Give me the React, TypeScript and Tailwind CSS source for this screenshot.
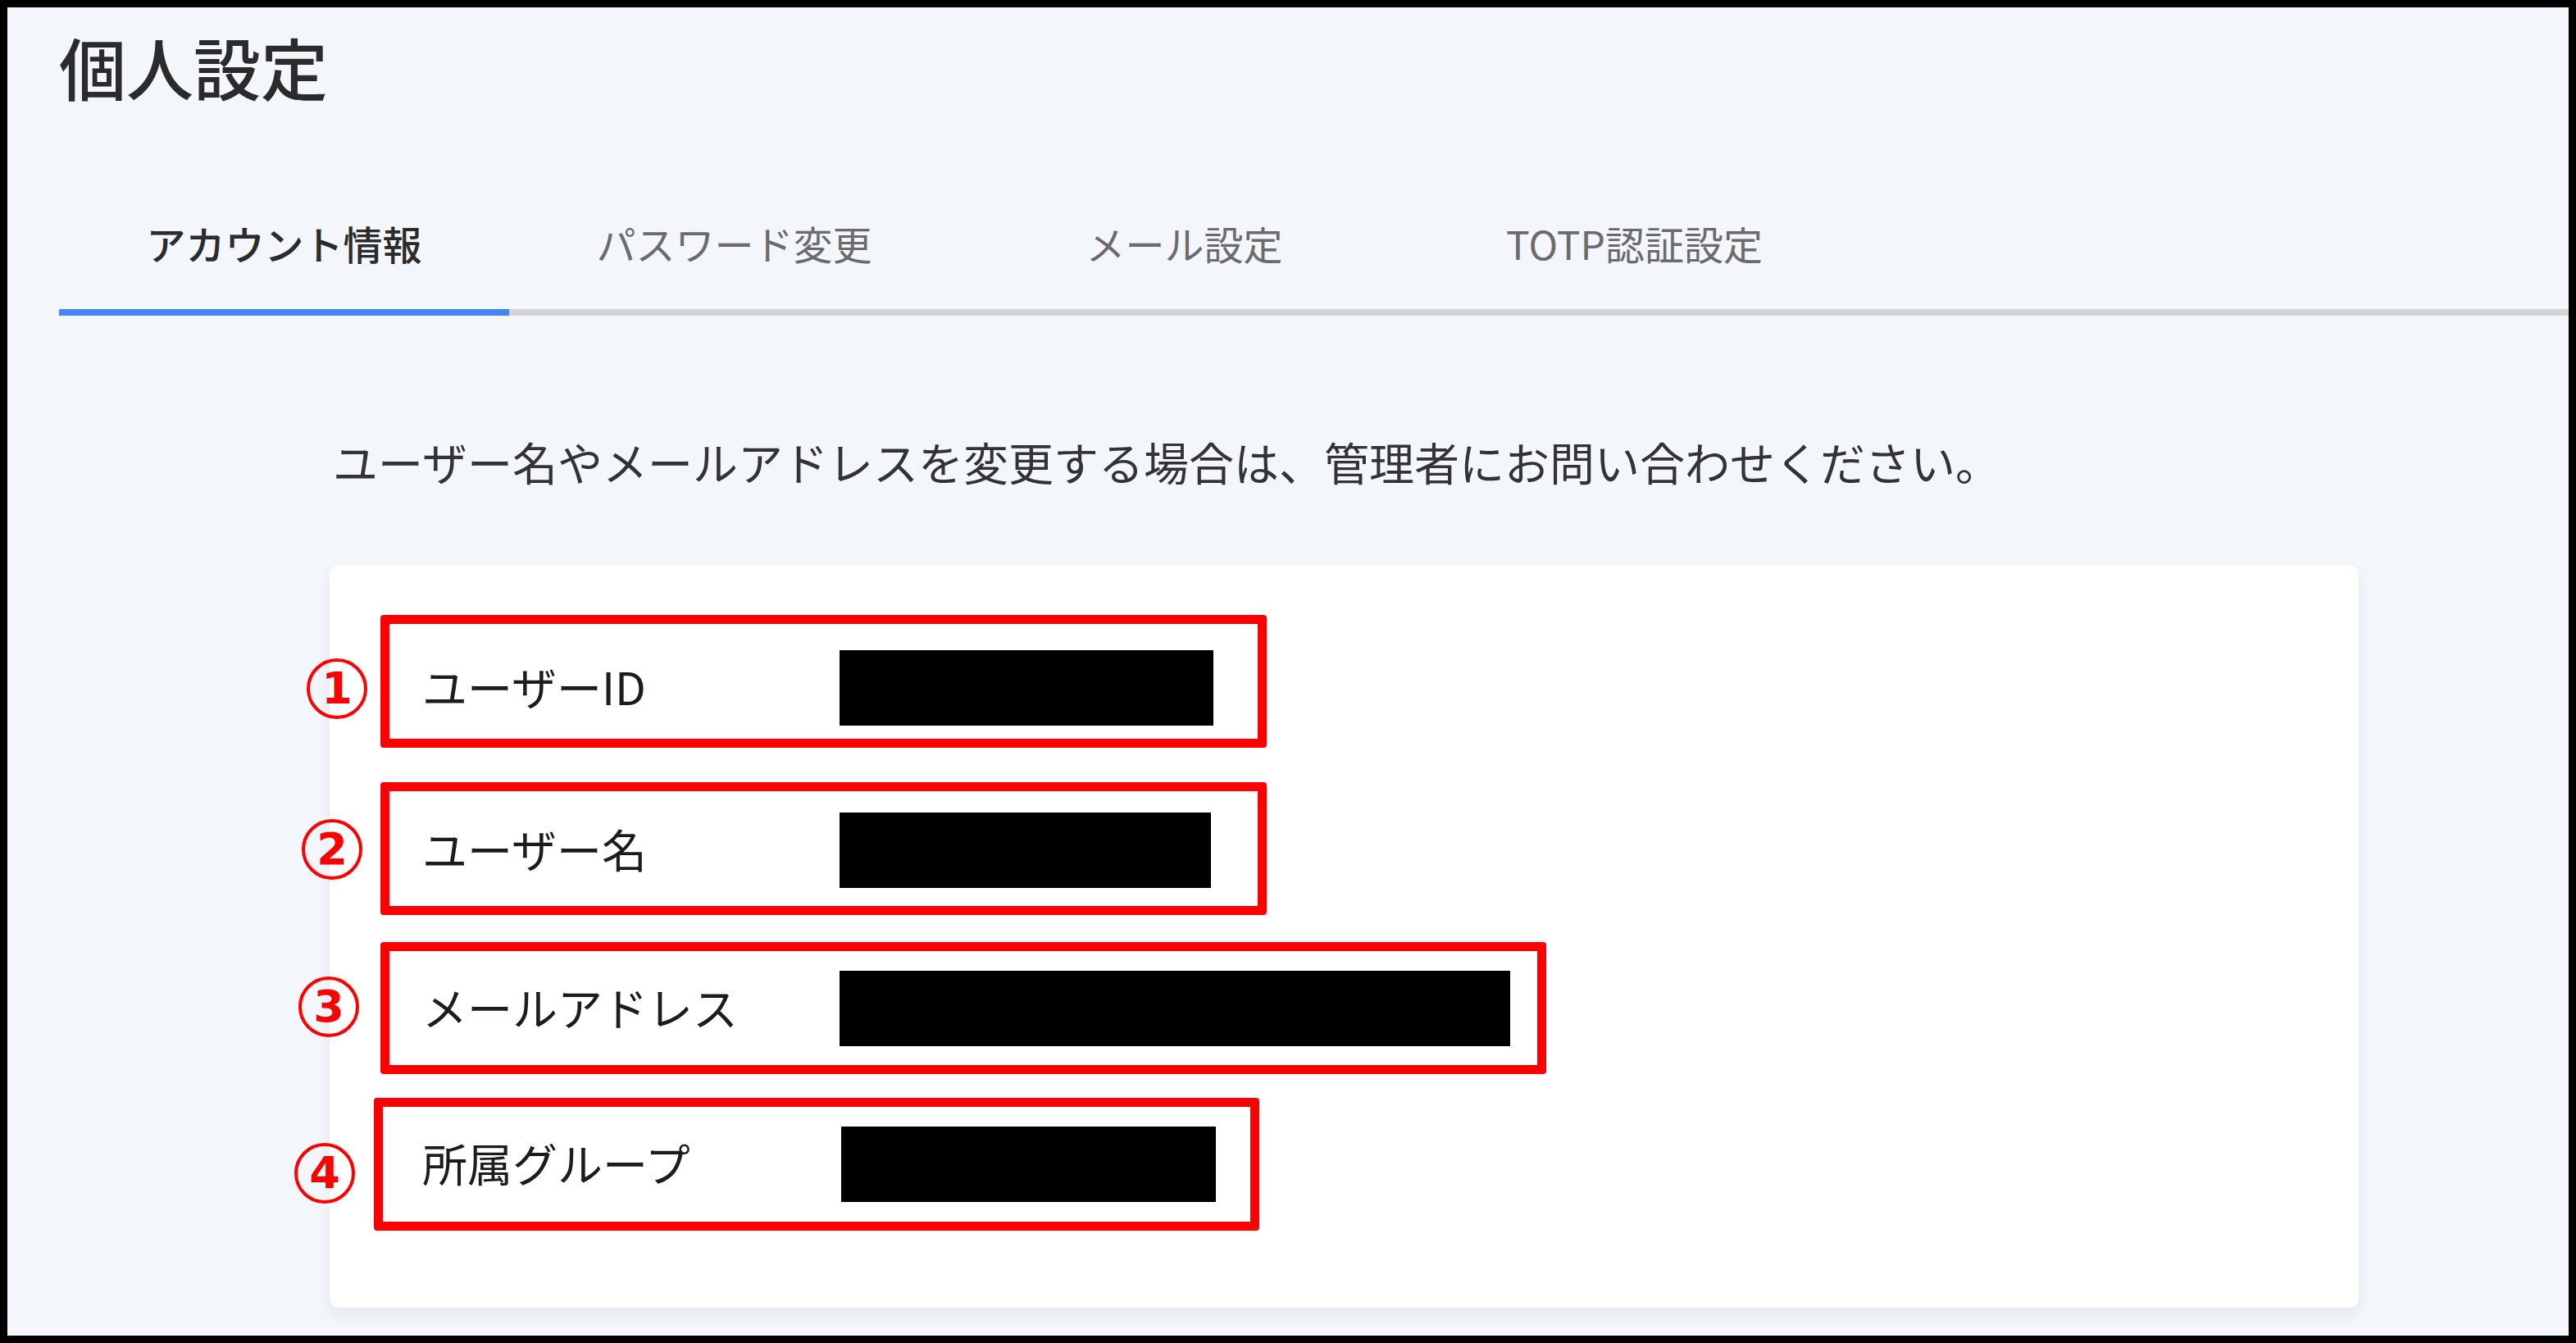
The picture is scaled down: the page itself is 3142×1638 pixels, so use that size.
import React from 'react';

type Row = {
  label: string;
  rowClass: string;
  valueClass: string;
  frameClass: string;
  badgeClass: string;
  num: string;
};

const rows: Row[] = [
  {
    label: 'ユーザーID',
    rowClass: 'mt-0',
    valueClass: 'w-[456px]',
    frameClass: '-left-[51px] -top-[43px] w-[1081px] h-[162px]',
    badgeClass: '-left-[141px] top-[10px]',
    num: '1',
  },
  {
    label: 'ユーザー名',
    rowClass: 'mt-[106px]',
    valueClass: 'w-[453px]',
    frameClass: '-left-[51px] -top-[37px] w-[1081px] h-[162px]',
    badgeClass: '-left-[147px] top-[8px]',
    num: '2',
  },
  {
    label: 'メールアドレス',
    rowClass: 'mt-[101px]',
    valueClass: 'w-[818px]',
    frameClass: '-left-[51px] -top-[35px] w-[1422px] h-[161px]',
    badgeClass: '-left-[151px] top-[7px]',
    num: '3',
  },
  {
    label: '所属グループ',
    rowClass: 'mt-[98px]',
    valueClass: 'w-[457px] ml-[2px]',
    frameClass: '-left-[59px] -top-[35px] w-[1080px] h-[162px]',
    badgeClass: '-left-[156px] top-[20px]',
    num: '4',
  },
];

const tabs = ['アカウント情報', 'パスワード変更', 'メール設定', 'TOTP認証設定'];

const InfoRow: React.FC<{ row: Row }> = ({ row }) => (
  <div className={`relative flex h-[92px] items-center ${row.rowClass}`}>
    <div className="w-[509px] pb-[6px] text-[55px] leading-none text-[#1c1c1c]">{row.label}</div>
    <div className={`h-[92px] bg-black ${row.valueClass}`} />

    {/* annotation frame + number */}
    <div className={`absolute rounded-[4px] border-[11px] border-[#ff0000] ${row.frameClass}`} />
    <div
      className={`absolute flex h-[74px] w-[74px] items-center justify-center rounded-full border-[4px] border-[#ff0000] ${row.badgeClass}`}
    >
      <span className="font-['DejaVu_Sans',sans-serif] text-[54px] leading-none font-bold text-[#ff0000]">
        {row.num}
      </span>
    </div>
  </div>
);

const App: React.FC = () => {
  return (
    <div className="h-[1638px] w-[3142px] overflow-hidden border-[9px] border-black bg-[#f3f6fb] font-['Noto_Sans_CJK_JP','Noto_Sans',sans-serif]">
      <div className="pl-[63px] pt-[31px]">
        <h1 className="text-[82px] leading-none font-medium text-[#2b2b2b]">個人設定</h1>

        <div className="mt-[150px] flex border-b-[8px] border-[#d4d4d4]">
          {tabs.map((tab, i) => (
            <div key={tab} className="relative w-[549px] pb-[55px] text-center">
              <span
                className={
                  i === 0
                    ? 'text-[48px] leading-none font-medium text-[#2b2b2b]'
                    : 'text-[48px] leading-none text-[#6b6b6b]'
                }
              >
                {tab}
              </span>
              {i === 0 && <div className="absolute -bottom-[8px] left-0 right-0 h-[8px] bg-[#4285f4]" />}
            </div>
          ))}
        </div>

        <div className="ml-[330px]">
          <p className="mt-[150px] pl-[4px] text-[55px] leading-none text-[#333]">
            ユーザー名やメールアドレスを変更する場合は、管理者にお問い合わせください。
          </p>

          <div className="mt-[99px] h-[906px] w-[2475px] rounded-[12px] bg-white pl-[113px] pt-[104px] shadow-[0_8px_18px_rgba(30,41,59,0.07)]">
            {rows.map((row) => (
              <InfoRow key={row.num} row={row} />
            ))}
          </div>
        </div>
      </div>
    </div>
  );
};

export default App;
